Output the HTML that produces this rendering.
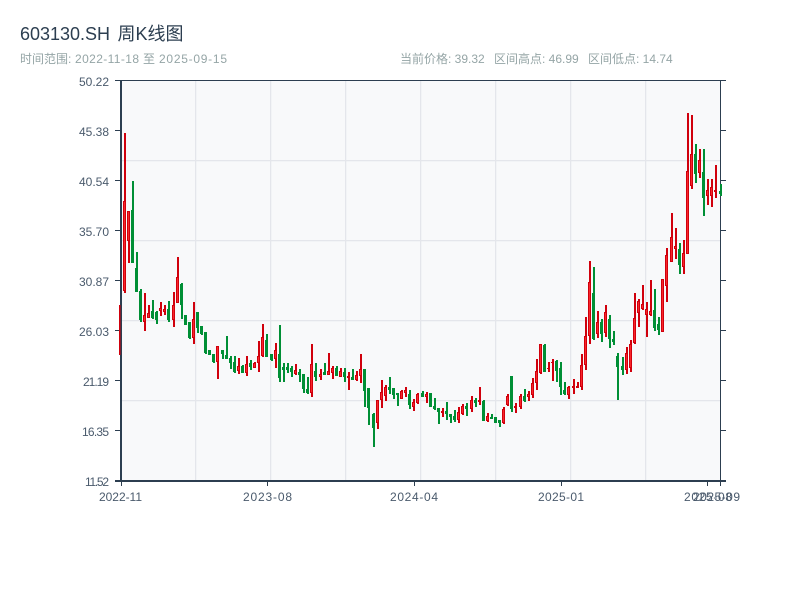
<!DOCTYPE html>
<html><head><meta charset="utf-8"><style>
html,body{margin:0;padding:0;background:#fff;width:800px;height:600px;overflow:hidden}
svg{position:absolute;left:0;top:0}
text{font-family:"Liberation Sans","Noto Sans CJK SC",sans-serif}
</style></head><body>
<svg id="s" width="800" height="600" viewBox="0 0 800 600" xmlns="http://www.w3.org/2000/svg">
<rect x="121" y="81" width="600" height="400" fill="#f8f9fa"/>
<g fill="#e4e6eb">
<rect x="195" y="81" width="1.3" height="400"/><rect x="270" y="81" width="1.3" height="400"/><rect x="345" y="81" width="1.3" height="400"/><rect x="420" y="81" width="1.3" height="400"/><rect x="495" y="81" width="1.3" height="400"/><rect x="570" y="81" width="1.3" height="400"/><rect x="645" y="81" width="1.3" height="400"/>
<rect x="121" y="160" width="600" height="1.3"/><rect x="121" y="240" width="600" height="1.3"/><rect x="121" y="320" width="600" height="1.3"/><rect x="121" y="400" width="600" height="1.3"/>
</g>
<g fill="#2c3e50">
<rect x="120" y="80" width="601" height="1"/><rect x="120" y="80" width="2" height="402"/><rect x="115" y="480" width="611" height="2"/><rect x="720" y="80" width="1" height="406"/>
<rect x="115" y="80" width="5" height="1"/><rect x="115" y="130" width="5" height="1"/><rect x="115" y="180" width="5" height="1"/><rect x="115" y="230" width="5" height="1"/><rect x="115" y="280" width="5" height="1"/><rect x="115" y="330" width="5" height="1"/><rect x="115" y="380" width="5" height="1"/><rect x="115" y="430" width="5" height="1"/>
<rect x="721" y="80" width="5" height="1"/><rect x="721" y="130" width="5" height="1"/><rect x="721" y="180" width="5" height="1"/><rect x="721" y="230" width="5" height="1"/><rect x="721" y="280" width="5" height="1"/><rect x="721" y="330" width="5" height="1"/><rect x="721" y="380" width="5" height="1"/><rect x="721" y="430" width="5" height="1"/>
<rect x="121" y="482" width="1" height="4"/><rect x="267" y="482" width="1" height="4"/><rect x="414" y="482" width="1" height="4"/><rect x="561" y="482" width="1" height="4"/><rect x="707" y="482" width="1" height="4"/>
</g>
<g font-size="18" fill="#2c3e50">
<text x="20" y="40" textLength="90">603130.SH</text>
<text x="117.5" y="40">周K线图</text>
</g>
<g font-size="12" fill="#95a5a6">
<text x="20" y="63">时间范围:</text>
<text x="75" y="63" textLength="64">2022-11-18</text>
<text x="143" y="63">至</text>
<text x="159" y="63" textLength="68">2025-09-15</text>
<text x="400" y="63">当前价格: 39.32</text>
<text x="494" y="63">区间高点: 46.99</text>
<text x="588" y="63">区间低点: 14.74</text>
</g>
<g font-size="12" fill="#4a5a6c">
<text x="79" y="86" textLength="30">50.22</text><text x="79" y="136" textLength="30">45.38</text><text x="79" y="186" textLength="30">40.54</text><text x="79" y="236" textLength="30">35.70</text><text x="79" y="286" textLength="30">30.87</text><text x="79" y="336" textLength="30">26.03</text><text x="83" y="386" textLength="26">21.19</text><text x="82" y="436" textLength="27">16.35</text><text x="85" y="486" textLength="24">11.52</text>
</g>
<g font-size="12" fill="#4a5a6c">
<text x="99" y="501" textLength="43">2022-11</text><text x="243" y="501" textLength="49">2023-08</text><text x="390" y="501" textLength="48">2024-04</text><text x="538" y="501" textLength="46">2025-01</text><text x="684" y="501" textLength="48">2025-08</text><text x="693" y="501" textLength="47">2025-09</text>
</g>
<g id="c"></g>
</svg>
<script>
var d="r305,355,305,355 r133,293,201,291 r211,263,211,241 g181,263,210,263 g252,292,268,292 g289,322,291,320 r293,331,315,322 r305,318,313,318 g300,319,311,318 g311,324,312,320 r302,316,308,311 r305,315,309,312 g301,322,309,320 r292,327,305,320 r257,303,277,303 g283,319,284,305 g315,325,315,325 g322,339,322,338 r302,344,319,338 g312,333,312,328 g326,335,326,334 g332,354,332,353 g350,355,350,355 g354,363,354,362 r346,379,346,362 g350,359,350,354 g336,359,355,359 g356,369,358,363 g356,373,362,372 r358,374,366,371 g365,373,366,373 r356,376,364,373 g360,370,363,367 r362,368,363,368 r341,372,356,363 r324,357,337,356 g334,357,340,357 g354,361,354,360 r343,368,350,359 g325,382,354,378 g363,382,367,370 g363,373,367,370 g366,377,368,372 r364,375,370,374 g369,382,372,375 g374,393,374,389 g377,394,389,393 r344,397,364,393 g363,381,371,377 r369,380,374,377 g363,375,372,375 r353,375,371,375 r366,379,368,373 g366,376,368,376 r368,377,371,377 g368,382,372,377 r372,390,376,378 g369,380,377,380 r371,381,375,380 r354,383,369,376 g369,407,369,391 g388,425,388,408 g413,447,414,428 r400,429,400,423 r380,408,392,400 r385,401,387,396 g377,394,387,390 g388,399,388,395 g393,406,393,395 r390,399,391,399 r387,397,390,393 g390,409,394,405 r399,411,402,407 r393,404,394,403 g391,397,393,397 r392,403,394,397 g393,407,393,407 g398,410,406,409 g408,424,408,412 r408,417,411,413 g402,420,411,414 g414,423,414,417 g410,422,416,420 r407,423,412,420 r404,415,406,414 g403,416,406,409 r396,412,400,409 g398,407,400,403 r387,405,400,402 g400,421,401,421 r413,422,416,421 g414,419,417,419 g417,423,417,423 g420,427,420,423 r407,424,409,423 r394,406,396,405 g376,412,376,409 r403,413,406,408 r394,409,396,407 g389,402,396,401 r391,401,394,397 r378,398,383,395 r359,390,371,383 r344,374,344,373 g344,372,345,372 r362,372,368,366 r359,381,362,357 g360,382,361,371 g362,395,368,387 g382,395,390,394 r386,399,387,395 r379,394,386,388 r382,388,386,388 r354,390,365,387 r317,370,336,365 r261,344,282,336 g267,340,293,339 r311,338,322,334 g319,342,322,334 r305,337,312,333 g315,348,319,339 g331,345,339,342 g353,400,356,367 g357,375,366,370 r347,374,353,370 r340,372,344,368 r293,344,318,343 r299,327,301,313 r285,310,304,309 r302,337,309,315 r280,316,311,315 g289,331,310,328 g317,335,324,330 r279,332,279,332 r248,302,255,286 r213,262,237,262 r228,259,246,249 g243,274,249,265 r240,274,253,267 r113,254,171,254 r115,189,154,186 g144,183,154,174 r149,178,160,173 g149,216,172,198 r179,205,190,196 r179,207,187,196 r165,198,190,192 g184,196,191,194".split(" ");
var h="";
function R(x,y,w,b,f){if(b<=y)b=y+1;h+='<rect x="'+x+'" y="'+y+'" width="'+w+'" height="'+(b-y)+'" fill="'+f+'"/>'}
d.forEach(function(e,i){
 var g=e[0]=="g",v=e.slice(1).split(",").map(Number),X=Math.floor(121+i*600/147),c=g?"#008f35":"#d0000c";
 if(i==0){R(119,v[0],1.5,v[1],c);return}
 R(X-1,v[0],2,v[1],c);
 R(X-2,v[2],3,v[3],c);
 if(!g&&v[3]-v[2]>2)R(X-1,v[2]+1,1,v[3]-1,"#f8262a");
});
document.getElementById("c").innerHTML=h;
</script>
</body></html>
